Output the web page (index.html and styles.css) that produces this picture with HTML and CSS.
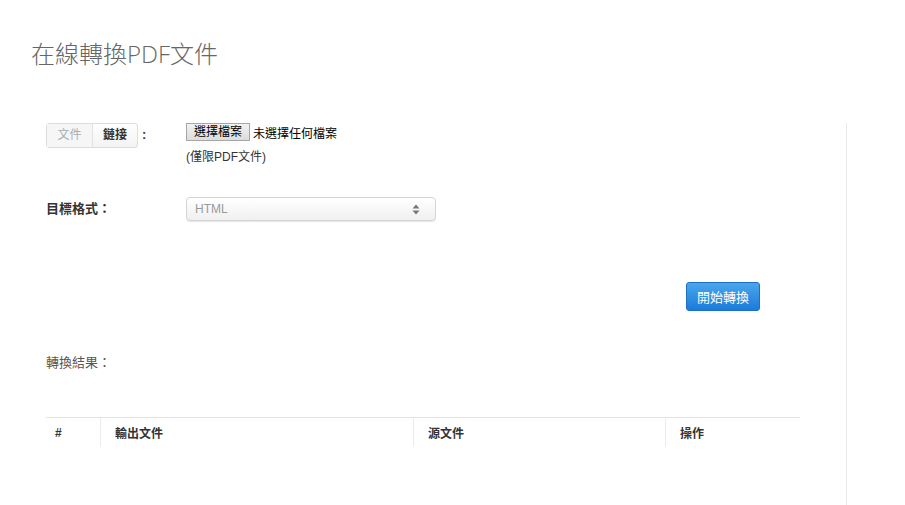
FILE: index.html
```html
<!DOCTYPE html>
<html lang="zh-Hant">
<head>
    <meta charset="UTF-8">
    <meta name="viewport" content="width=device-width, initial-scale=1.0">
    <title>在線轉換PDF文件</title>
    <link rel="stylesheet" href="styles.css">
</head>
<body>
    <div class="page">
        <h1 class="title">在線轉換PDF文件</h1>

        <div class="panel">
            <div class="form">
                <div class="row row-file">
                    <div class="label">
                        <div class="tabs">
                            <span class="tab tab-off">文件</span>
                            <span class="tab tab-on">鏈接</span>
                        </div>
                        <span class="colon">:</span>
                    </div>
                    <div class="field">
                        <div class="file-line">
                            <span class="file-btn">選擇檔案</span>
                            <span class="file-name">未選擇任何檔案</span>
                        </div>
                        <div class="hint">(僅限PDF文件)</div>
                    </div>
                </div>

                <div class="row row-format">
                    <div class="label label-bold">目標格式：</div>
                    <div class="field">
                        <div class="select">
                            <span>HTML</span>
                            <svg width="8" height="11" viewBox="0 0 8 11">
                                <path d="M4 0.5 L7.5 4.5 H0.5 Z" fill="#777"/>
                                <path d="M4 10.5 L7.5 6.5 H0.5 Z" fill="#777"/>
                            </svg>
                        </div>
                    </div>
                </div>

                <div class="actions">
                    <button type="button" class="btn-convert">開始轉換</button>
                </div>
            </div>

            <div class="result-label">轉換結果：</div>

            <table class="result">
                <thead>
                    <tr>
                        <th class="c-num">#</th>
                        <th class="c-out">輸出文件</th>
                        <th class="c-src">源文件</th>
                        <th class="c-op">操作</th>
                    </tr>
                </thead>
            </table>
        </div>
    </div>
</body>
</html>
```

FILE: styles.css
```css
body {
    margin: 0;
    font-family: "Liberation Sans", "Noto Sans CJK TC", sans-serif;
    font-size: 12px;
    color: #333;
    background: #fff;
}

.page {
    padding: 37px 0 0 31px;
}

.title {
    margin: 0;
    font-size: 24px;
    font-weight: 300;
    line-height: 34px;
    color: #666;
    font-family: "Open Sans", "Noto Sans CJK TC", sans-serif;
}

.panel {
    margin: 52px 0 0 15px;
    width: 801px;
    min-height: 382px;
    border-right: 1px solid #e8e8e8;
    box-sizing: border-box;
}

.row {
    display: flex;
}

.label {
    width: 140px;
    flex-shrink: 0;
    display: flex;
    align-items: flex-start;
}

.label-bold {
    font-size: 13px;
    font-weight: bold;
    color: #333;
    line-height: 22px;
    padding-top: 1px;
}

.tabs {
    display: flex;
    border: 1px solid #dcdcdc;
    border-radius: 3px;
    background: linear-gradient(#fff, #f3f3f3);
    height: 23px;
}

.tab {
    display: block;
    line-height: 23px;
    font-size: 12px;
    text-align: center;
}

.tab-off {
    width: 45px;
    color: #a3adb8;
    background: #f6f6f6;
    border-right: 1px solid #e2e2e2;
}

.tab-on {
    width: 44px;
    font-weight: bold;
    color: #333;
}

.colon {
    margin-left: 4px;
    font-weight: bold;
    font-size: 13px;
    line-height: 24px;
}

.file-line {
    display: flex;
    align-items: center;
    height: 18px;
}

.file-btn {
    display: inline-block;
    height: 18px;
    line-height: 16px;
    padding: 0 7px;
    box-sizing: border-box;
    border: 1px solid #a6a6a6;
    background: linear-gradient(#f2f2f2, #dcdcdc);
    color: #000;
    font-size: 12px;
}

.file-name {
    margin-left: 3px;
    color: #000;
}

.hint {
    margin-top: 8px;
    line-height: 16px;
    color: #333;
}

.row-format {
    margin-top: 32px;
}

.select {
    width: 250px;
    height: 24px;
    box-sizing: border-box;
    border: 1px solid #d5d5d5;
    border-radius: 4px;
    background: linear-gradient(#fff, #f0f0f0);
    box-shadow: 0 1px 0 #dfe9f3;
    display: flex;
    align-items: center;
    justify-content: space-between;
    padding: 0 15px 0 8px;
    color: #999;
    font-size: 12px;
}

.actions {
    display: flex;
    justify-content: flex-end;
    padding-right: 86px;
    margin-top: 61px;
}

.btn-convert {
    width: 74px;
    height: 29px;
    border: 1px solid #1b6fc4;
    border-radius: 3px;
    background: linear-gradient(#4ba6ec, #1a7bd9);
    color: #fff;
    font-family: "Liberation Sans", "Noto Sans CJK TC", sans-serif;
    font-size: 13px;
    padding: 0;
    cursor: pointer;
}

.result-label {
    margin-top: 43px;
    font-size: 13px;
    color: #555;
    line-height: 18px;
}

.result {
    margin-top: 45px;
    width: 754px;
    border-collapse: collapse;
}

.result th {
    text-align: left;
    font-size: 12px;
    font-weight: bold;
    color: #333;
    height: 29px;
    padding: 0 0 0 14px;
    border-top: 1px solid #e4e4e4;
    border-left: 1px solid #ececec;
}

.result th.c-num {
    border-left: none;
    padding-left: 9px;
    width: 45px;
}

.c-out {
    width: 298px;
}

.c-src {
    width: 237px;
}
```
